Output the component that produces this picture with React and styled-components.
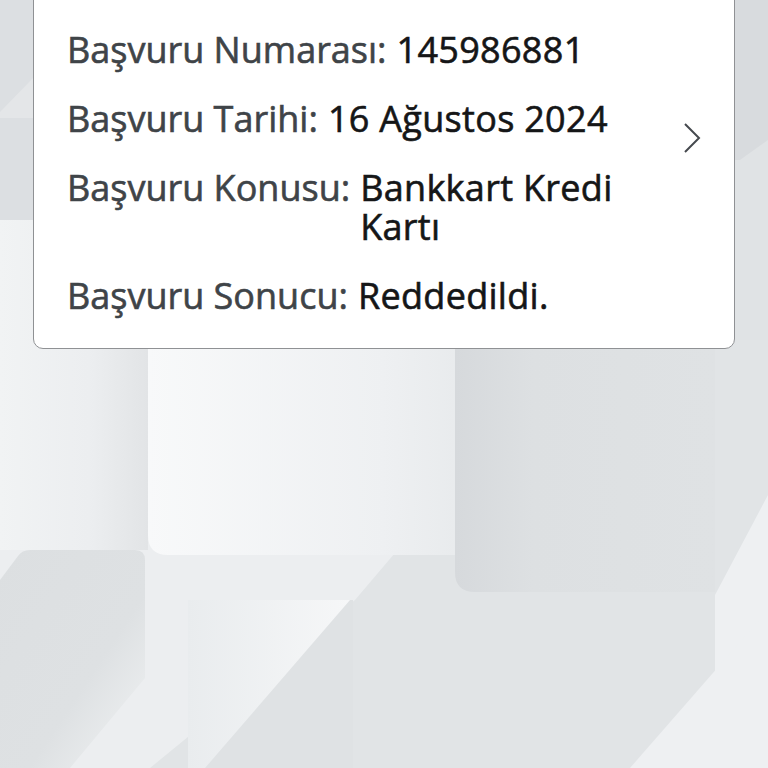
import React from "react";
import styled, { createGlobalStyle } from "styled-components";

const GlobalStyle = createGlobalStyle`
  html, body {
    margin: 0;
    padding: 0;
    background: #eceef0;
  }
  body {
    font-family: "Open Sans", "Noto Sans", sans-serif;
    overflow: hidden;
  }
`;

const Screen = styled.div`
  position: relative;
  width: 768px;
  height: 768px;
  overflow: hidden;
`;

const Backdrop = styled.svg`
  position: absolute;
  inset: 0;
  z-index: 0;
`;

const Content = styled.div`
  position: relative;
  z-index: 1;
  padding: 0 33px;
`;

const Card = styled.div`
  margin-top: -20px;
  background: #ffffff;
  border: 1.5px solid #8f9194;
  border-radius: 10px;
  padding: 49px 32px 33px 33px;
  display: flex;
  align-items: flex-start;
  justify-content: space-between;
`;

const InfoList = styled.div`
  display: flex;
  flex-direction: column;
  gap: 30px;
  width: 600px;
`;

const Row = styled.div`
  display: flex;
  font-size: 36px;
  line-height: 39px;
  -webkit-text-stroke: 0.6px currentColor;
`;

const Label = styled.span`
  color: #3f4448;
  white-space: nowrap;
  margin-right: 10px;
`;

const Value = styled.span`
  color: #151617;
  flex: 1;
  letter-spacing: 0.3px;
`;

const ChevronBox = styled.div`
  padding-top: 92px;
  width: 20px;
  display: flex;
  justify-content: center;
`;

const rows = [
  { label: "Başvuru Numarası:", value: "145986881" },
  { label: "Başvuru Tarihi:", value: "16 Ağustos 2024" },
  { label: "Başvuru Konusu:", value: "Bankkart Kredi Kartı" },
  { label: "Başvuru Sonucu:", value: "Reddedildi." },
];

const Pattern = () => (
  <Backdrop width="768" height="768" viewBox="0 0 768 768">
    <defs>
      <linearGradient id="lightA" x1="0" y1="0" x2="1" y2="0">
        <stop offset="0" stopColor="#f8f9fa" />
        <stop offset="0.55" stopColor="#eef0f2" />
        <stop offset="1" stopColor="#e0e3e5" />
      </linearGradient>
      <linearGradient id="leftStrip" x1="0" y1="0" x2="1" y2="0">
        <stop offset="0" stopColor="#f1f3f4" />
        <stop offset="0.6" stopColor="#eceef0" />
        <stop offset="1" stopColor="#e2e4e6" />
      </linearGradient>
      <linearGradient id="darkD" x1="0" y1="0" x2="1" y2="1">
        <stop offset="0" stopColor="#dcdfe1" />
        <stop offset="0.6" stopColor="#dee1e3" />
        <stop offset="1" stopColor="#f1f3f4" />
      </linearGradient>
      <linearGradient id="lightC" x1="0" y1="0" x2="1" y2="0">
        <stop offset="0" stopColor="#e9ecee" />
        <stop offset="1" stopColor="#f6f7f8" />
      </linearGradient>
      <linearGradient id="midB" x1="0" y1="0" x2="1" y2="0">
        <stop offset="0" stopColor="#d6d9dc" />
        <stop offset="0.3" stopColor="#dde0e2" />
        <stop offset="1" stopColor="#dfe2e4" />
      </linearGradient>
    </defs>
    <rect width="768" height="768" fill="#eceef0" />
    <rect x="0" y="220" width="148" height="330" fill="url(#leftStrip)" />
    <rect x="0" y="0" width="160" height="220" fill="#dcdfe2" />
    <polygon points="0,112 33,78 40,78 40,118 0,118" fill="#e4e6e8" />
    <rect x="690" y="0" width="78" height="160" fill="#d8dbde" />
    <polygon points="690,160 740,160 768,140 768,360 690,360" fill="#e0e3e5" />
    <polygon points="576,340 768,340 768,768 150,768 355,600" fill="#e1e4e6" />
    <path d="M148 330 H575 L460 540 V555 H168 Q148 555 148 535 Z" fill="url(#lightA)" />
    <path d="M455 330 H715 V592 H475 Q455 592 455 572 Z" fill="url(#midB)" />
    <polygon points="768,495 715,595 715,680 768,680" fill="#eef0f2" />
    <polygon points="768,610 630,768 768,768" fill="#eef0f2" />
    <path d="M0 580 L18 556 Q22 550 30 550 H135 Q145 550 145 560 V678 L70 768 H0 Z" fill="url(#darkD)" />
    <rect x="188" y="600" width="165" height="168" fill="#dfe2e4" />
    <polygon points="188,600 350,600 205,768 188,768" fill="url(#lightC)" />
  </Backdrop>
);

const Chevron = () => (
  <svg width="18" height="32" viewBox="0 0 18 32">
    <polyline points="2,2 16,16 2,30" fill="none" stroke="#45494e" strokeWidth="2" />
  </svg>
);

export default function App() {
  return (
    <Screen>
      <GlobalStyle />
      <Pattern />
      <Content>
        <Card>
          <InfoList>
            {rows.map((r) => (
              <Row key={r.label}>
                <Label>{r.label}</Label>
                <Value>{r.value}</Value>
              </Row>
            ))}
          </InfoList>
          <ChevronBox>
            <Chevron />
          </ChevronBox>
        </Card>
      </Content>
    </Screen>
  );
}
